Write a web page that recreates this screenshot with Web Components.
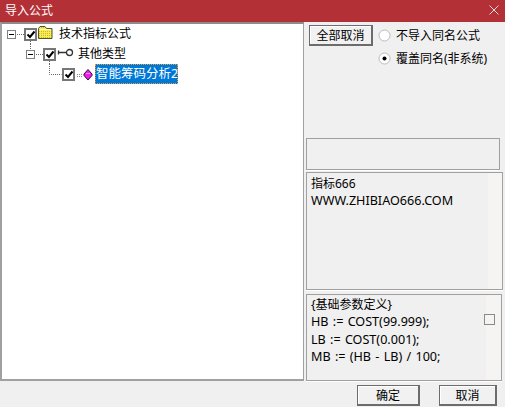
<!DOCTYPE html>
<html>
<head>
<meta charset="utf-8">
<title>导入公式</title>
<style>
  html, body { margin: 0; padding: 0; background: #f0f0f0; }
  body { font: 12px "Noto Sans", "Noto Sans CJK SC", sans-serif; color: #000; }
  .en { font-size: 12.6px; word-spacing: 1px; }
</style>
</head>
<body>

<import-dialog>
  <tree-node slot="tree" level="0" icon="folder" label="技术指标公式"></tree-node>
  <tree-node slot="tree" level="1" icon="key" label="其他类型"></tree-node>
  <tree-node slot="tree" level="2" icon="gem" label="智能筹码分析2" selected></tree-node>

  <win-button slot="options" w="64">全部取消</win-button>
  <win-radio slot="radios">不导入同名公式</win-radio>
  <win-radio slot="radios" checked>覆盖同名(非系统)</win-radio>

  <text-box slot="blank" h="32" mr="5"></text-box>
  <text-box slot="info" h="118" mr="2" pad="2" shade="181">指标666<br><span class="en">WWW.ZHIBIAO666.COM</span></text-box>
  <text-box slot="code" h="87" mr="3" pad="1" shade="179" box>{基础参数定义}<br><span class="en">HB := COST(99.999);</span><br><span class="en">LB := COST(0.001);</span><br><span class="en">MB := (HB - LB) / 100;</span></text-box>

  <win-button slot="ok" w="63">确定</win-button>
  <win-button slot="cancel" w="58">取消</win-button>
</import-dialog>

<script>
// 树节点前缀：连接线 + 展开框 + 复选框 + 图标，都画在一个 svg 里
const ICONS = {
  folder: `<path d="M1.500 13.500V3.500L3 1.500h5l1.500 2h5.500v10z" fill="url(#hatch)" stroke="#55552a"/>
           <path d="M2.500 4.500h11.500" stroke="#fffbc0"/>`,
  key: `<circle cx="11.500" cy="4.500" r="3" fill="#fff" stroke="#333" stroke-width="1.300"/>
        <path d="M0.500 2.500v4M0.500 4.500H8" stroke="#333" fill="none" stroke-width="1.300"/>`,
  gem: `<path d="M0 5.500h5M0 7.500h5" stroke="#888" stroke-dasharray="1 1"/>
        <path d="M11 .5l4 4.500v1.500l-4 4.500-4-4.500V5z" fill="#f01ce8" stroke="#30103a"/>
        <path d="M9 4.500h4" stroke="#ff90f0"/>`
};

class TreeNode extends HTMLElement {
  connectedCallback() {
    const level = +this.getAttribute('level');
    const icon = this.getAttribute('icon');
    const sel = this.hasAttribute('selected');
    const leaf = level === 2;
    const root = level === 0;

    // 连接线
    let lines = '';
    if (root) {
      lines = 'M15 10.500h7M28.500 17v3';
    } else if (level === 1) {
      lines = 'M28.500 0v5M34 10.500h7M47.500 17v3';
    } else {
      lines = 'M47.500 0v10.500h12';
    }

    // 展开框
    const ex = [5, 24][level];
    const expander = leaf ? '' : `
      <rect x="${ex + .5}" y="6.500" width="8" height="8" fill="#fff" stroke="#808080"/>
      <path d="M${ex + 2} 10.500h5" stroke="#000"/>`;

    // 复选框
    const cx = [22, 41, 60][level];
    const check = `
      <rect x="${cx + 1}" y="5" width="11" height="11" fill="#fff" stroke="#777" stroke-width="2"/>
      <path d="M${cx + 3.500} 10.500l2.500 2.500 4.500-5.500" fill="none" stroke="#000" stroke-width="2"/>`;

    const ix = [35, 56, 75][level];
    const iy = [1, 4, 5][level];
    const width = [52, 75, 91][level];

    this.attachShadow({ mode: 'open' }).innerHTML = `
      <style>
        :host { display: flex; height: 20px; align-items: center; }
        svg { flex: none; display: block; }
        .label { white-space: nowrap; line-height: 16px; margin-left: ${[4, 0, 2][level]}px; padding: 0 1px; }
        .sel {
          box-sizing: border-box; margin-left: 2px;
          background: #0078d7; color: #fff;
          outline: 1px dotted #f0a030; outline-offset: -1px;
          height: 20px; line-height: 20px; width: 83px; padding: 0 1px;
          font-size: 12.5px;
        }
      </style>
      <svg width="${width}" height="20" viewBox="0 0 ${width} 20">
        <defs>
          <pattern id="hatch" width="2" height="2" patternUnits="userSpaceOnUse">
            <rect width="2" height="2" fill="#f8ec50"/><rect width="1" height="1" fill="#c8b838"/>
          </pattern>
        </defs>
        <path d="${lines}" fill="none" stroke="#666" stroke-dasharray="1 1"/>
        ${expander}${check}
        <g transform="translate(${ix} ${iy})">${ICONS[icon]}</g>
      </svg>
      <span class="label ${sel ? 'sel' : ''}">${this.getAttribute('label')}</span>`;
  }
}
customElements.define('tree-node', TreeNode);

class WinButton extends HTMLElement {
  connectedCallback() {
    const w = this.getAttribute('w');
    this.attachShadow({ mode: 'open' }).innerHTML = `
      <style>
        :host {
          display: flex; align-items: center; justify-content: center;
          box-sizing: border-box; width: ${w}px; height: 21px;
          background: #f1f1f1; border: 1px solid #6c6c6c;
          border-right-width: 2px; border-bottom-width: 2px;
          box-shadow: inset 1px 1px 0 #fff;
          white-space: nowrap; font-size: 12px;
        }
      </style><slot></slot>`;
  }
}
customElements.define('win-button', WinButton);

class WinRadio extends HTMLElement {
  connectedCallback() {
    const dot = this.hasAttribute('checked')
      ? '<circle cx="6.500" cy="6.500" r="2" fill="#000"/>' : '';
    this.attachShadow({ mode: 'open' }).innerHTML = `
      <style>
        :host { display: flex; align-items: center; gap: 5px; height: 20px; white-space: nowrap; }
        svg { display: block; flex: none; }
      </style>
      <svg width="13" height="13" viewBox="0 0 13 13">
        <circle cx="6.500" cy="6.500" r="5.500" fill="#fff" stroke="#bbb"/>${dot}
      </svg>
      <span><slot></slot></span>`;
  }
}
customElements.define('win-radio', WinRadio);

class TextBox extends HTMLElement {
  connectedCallback() {
    const shade = this.getAttribute('shade');
    const fill = shade ? `background: linear-gradient(90deg, #f0f0f0 ${shade}px, #f5f4f2 0);` : '';
    this.attachShadow({ mode: 'open' }).innerHTML = `
      <style>
        :host {
          display: block; box-sizing: border-box; position: relative;
          height: ${this.getAttribute('h')}px;
          margin-right: ${this.getAttribute('mr')}px;
          border: 1px solid #a0a0a0;
          box-shadow: 0 1px 0 #fff;
          padding: ${this.getAttribute('pad') || 0}px 4px;
          line-height: 17.400px;
          ${fill}
        }
        .tick {
          position: absolute; right: 6px; top: 19px;
          width: 9px; height: 9px; border: 1px solid #8a8a8a; background: #f4f4f4;
        }
      </style>
      <slot></slot>${this.hasAttribute('box') ? '<div class="tick"></div>' : ''}`;
  }
}
customElements.define('text-box', TextBox);

class ImportDialog extends HTMLElement {
  constructor() {
    super();
    this.attachShadow({ mode: 'open' }).innerHTML = `
      <style>
        :host { display: grid; grid-template-rows: 22px 359px 26px; width: 505px; height: 407px; background: #f0f0f0; overflow: hidden; }
        .title {
          background: #b33036; color: #fff; display: flex; align-items: center;
          justify-content: space-between; padding: 0 6px 2px 5px; font-size: 12px; height: 20px;
        }
        .title svg { display: block; }
        .main { display: grid; grid-template-columns: 305px 1fr; }
        .tree {
          box-sizing: border-box; background: #fff;
          border: 2px solid #a0a0a0; border-width: 2px 1px 2px 2px; border-top-color: #8c8c8c;
          margin-right: 1px;
        }
        .side { display: flex; flex-direction: column; padding-left: 1px; }
        .opts { display: flex; gap: 5px; padding: 3px 0 0 3px; height: 116px; box-sizing: border-box; }
        .radios { display: flex; flex-direction: column; gap: 3px; }
        .stack { display: grid; grid-template-rows: 32px 118px 87px; row-gap: 2px; }
        .stack slot[name=code] { display: block; margin-top: 2px; }
        .foot { display: flex; justify-content: flex-end; gap: 19px; padding: 4px 8px 0 0; }
      </style>
      <div class="title">
        <span>导入公式</span>
        <svg width="10" height="10" viewBox="0 0 10 10"><path d="M.5.5l9 9M9.500.5l-9 9" stroke="#f0d8d8"/></svg>
      </div>
      <div class="main">
        <div class="tree"><slot name="tree"></slot></div>
        <div class="side">
          <div class="opts">
            <slot name="options"></slot>
            <div class="radios"><slot name="radios"></slot></div>
          </div>
          <div class="stack">
            <slot name="blank"></slot>
            <slot name="info"></slot>
            <slot name="code"></slot>
          </div>
        </div>
      </div>
      <div class="foot"><slot name="ok"></slot><slot name="cancel"></slot></div>`;
  }
}
customElements.define('import-dialog', ImportDialog);
</script>
</body>
</html>
